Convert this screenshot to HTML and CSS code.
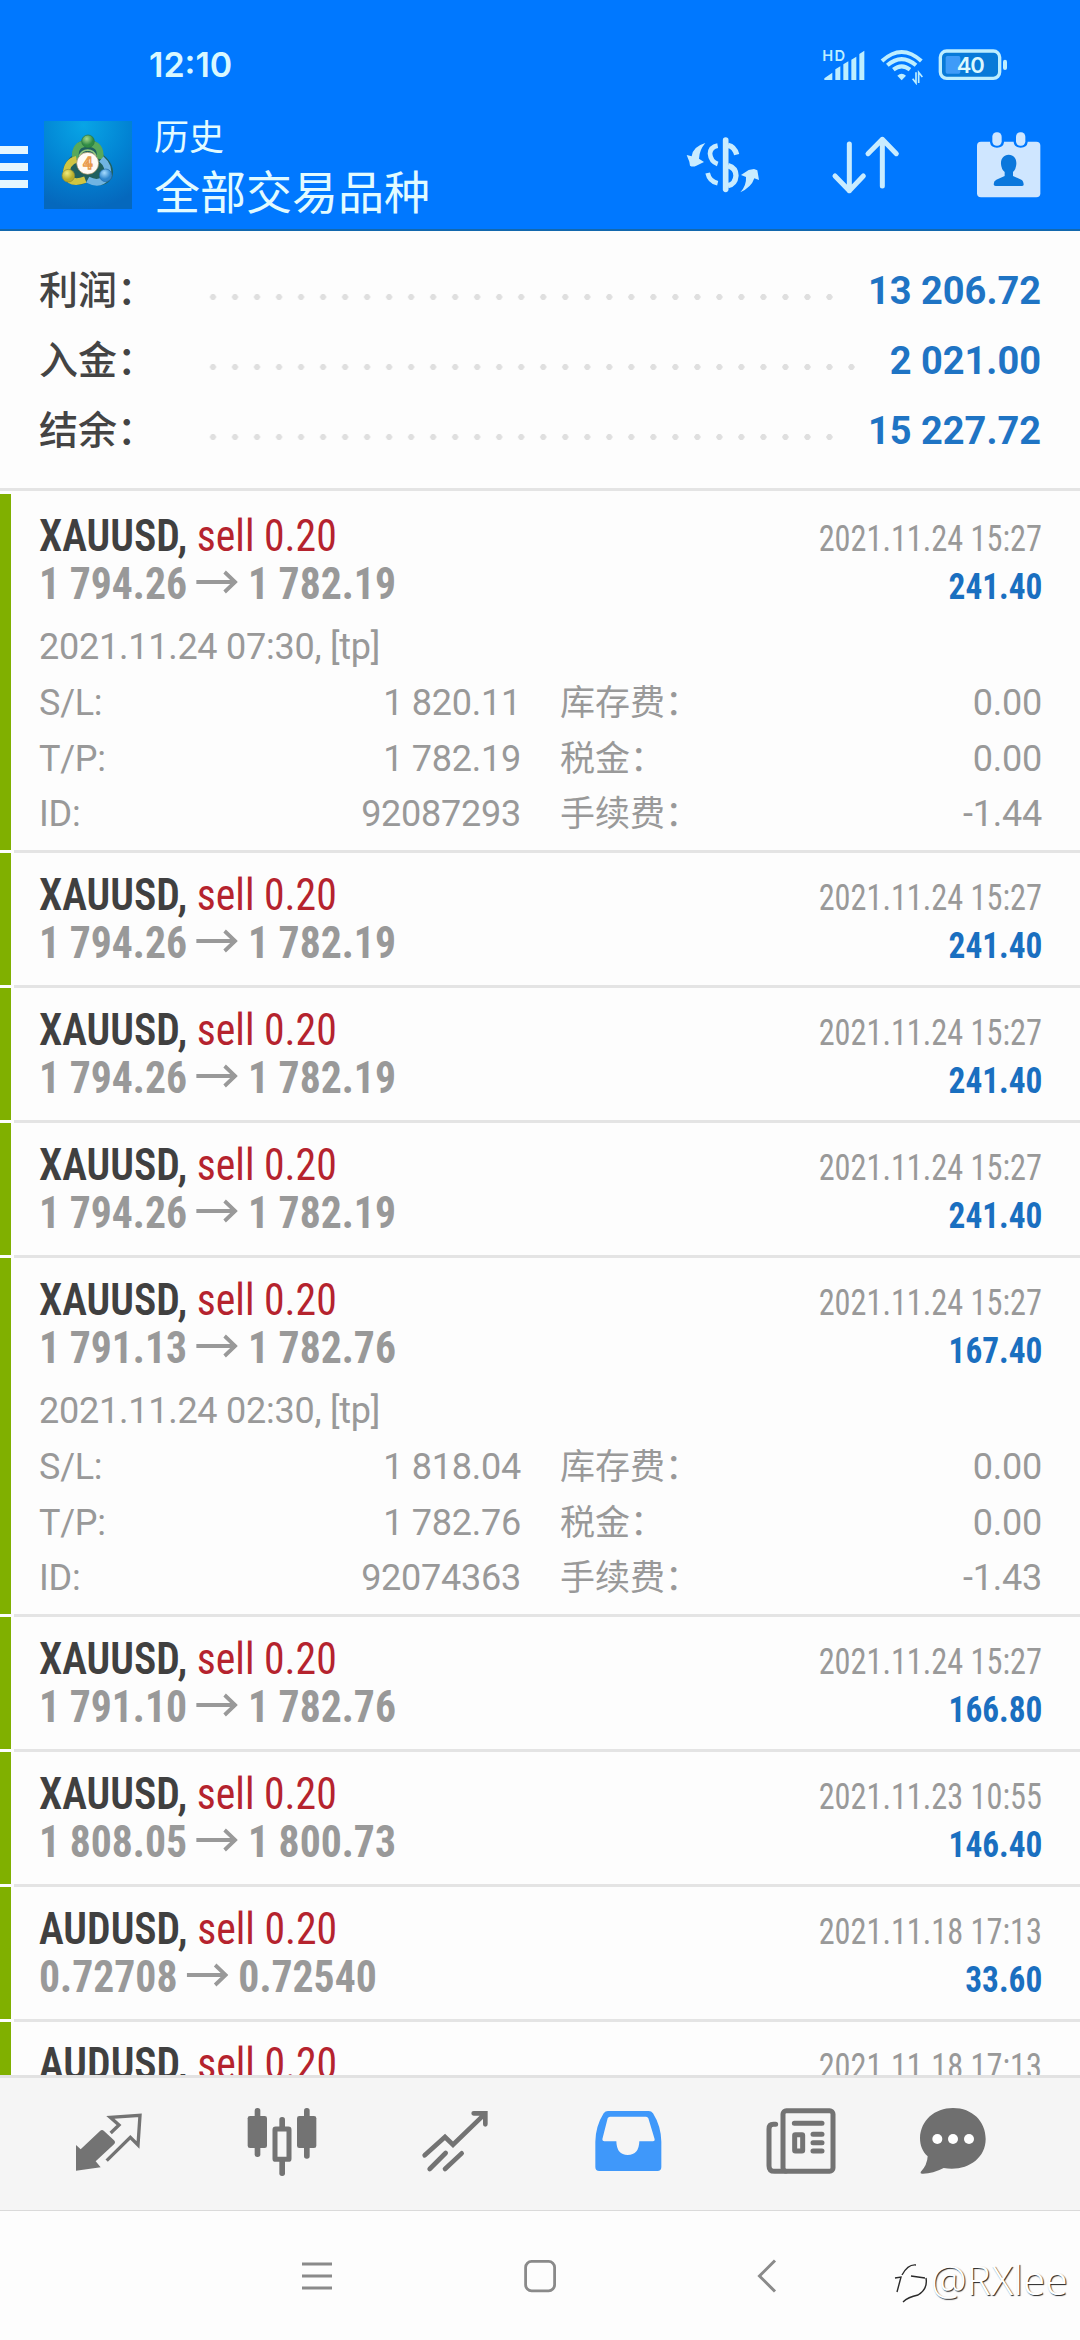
FILE: index.html
```html
<!DOCTYPE html>
<html lang="zh-CN">
<head>
<meta charset="utf-8">
<title>历史</title>
<link rel="stylesheet" href="styles.css">
</head>
<body>
<svg class="defs" width="0" height="0">
  <symbol id="arrow" viewBox="0 0 44 24"><path d="M0 12H41M30 2L41 12L30 22" fill="none" stroke="#999" stroke-width="4"/></symbol>
</svg>

<header class="header">
  <div class="status">
    <span class="clock">12:10</span>
    <div class="status-icons">
      <svg width="44" height="34" viewBox="455 48 132 102" fill="#bdeeff">
        <text x="456" y="87" font-size="44" font-weight="600" font-family="Inter, sans-serif" textLength="68">HD</text>
        <path d="M462 144V139L486 122V144zM495 144V112L510 103V144zM519 144V97L534 88V144zM543 144V83L558 74V144zM567 144V66L582 56V144z"/>
      </svg>
      <svg class="wifi" width="44" height="38" viewBox="628 48 132 114" fill="none" stroke="#bdeeff">
        <path d="M634 90Q693 36 752 90M650 103Q693 66 736 103M668 116Q693 96 718 116" stroke-width="12"/>
        <path d="M680 134Q693 122 706 134L693 148z" fill="#bdeeff" stroke="none"/>
        <path d="M736 124V156L726 143M744 156V124L755 138" stroke-width="5"/>
      </svg>
      <svg class="battery" width="70" height="34" viewBox="801 52 210 102">
        <rect x="808" y="61" width="178" height="82" rx="19" fill="#087ad8" stroke="#bdeeff" stroke-width="10"/>
        <rect x="824" y="76" width="44" height="53" rx="5" fill="#3f9bf8"/>
        <rect x="996" y="87" width="12" height="31" rx="6" fill="#bdeeff"/>
        <text x="857" y="128" font-size="66" font-weight="600" font-family="Inter, sans-serif" fill="#d9f8ff" textLength="84">40</text>
      </svg>
    </div>
  </div>
  <div class="appbar">
    <div class="burger"><i></i><i></i><i></i></div>
    <svg class="logo" width="88" height="88" viewBox="24 36 264 264">
      <defs>
        <radialGradient id="sky" cx="45%" cy="5%" r="95%"><stop offset="0" stop-color="#08a5e6"/><stop offset=".55" stop-color="#0283d3"/><stop offset="1" stop-color="#0568bd"/></radialGradient>
        <radialGradient id="green" cx="40%" cy="30%"><stop offset="0" stop-color="#a5d88c"/><stop offset="1" stop-color="#2f8b45"/></radialGradient>
        <radialGradient id="gold" cx="40%" cy="30%"><stop offset="0" stop-color="#f0ec7c"/><stop offset="1" stop-color="#b7ad2b"/></radialGradient>
        <radialGradient id="blue" cx="40%" cy="30%"><stop offset="0" stop-color="#a6dcff"/><stop offset="1" stop-color="#2f86cc"/></radialGradient>
      </defs>
      <rect x="24" y="36" width="264" height="264" fill="url(#sky)"/>
      <path d="M155 92C180 92 200 108 202 138C224 154 238 182 228 206C212 234 178 234 155 218C132 234 98 232 82 208C76 180 88 156 109 140C110 108 130 92 155 92z" fill="#20605f"/>
      <g fill="none">
        <path d="M119 150Q112 104 155 103Q198 104 192 150" stroke="#58a95b" stroke-width="20"/>
        <path d="M122 151Q92 158 90 198Q104 228 148 212" stroke="#cfc543" stroke-width="20"/>
        <path d="M155 212Q192 232 214 202Q222 172 196 150" stroke="#70b4e2" stroke-width="20"/>
        <path d="M130 141Q137 124 155 123Q174 124 180 141" stroke="#93c77f" stroke-width="5"/>
      </g>
      <circle cx="156" cy="97" r="19" fill="url(#green)" stroke="#2a7443" stroke-width="2"/>
      <circle cx="97" cy="200" r="19" fill="url(#gold)" stroke="#8f8a35" stroke-width="2"/>
      <circle cx="209" cy="199" r="19" fill="url(#blue)" stroke="#1f6aa8" stroke-width="2"/>
      <circle cx="155" cy="163" r="33" fill="#fffaf5" stroke="#9d8b55" stroke-width="2"/>
      <text x="155" y="181" font-size="50" font-weight="700" font-family="Roboto, sans-serif" text-anchor="middle" fill="#fff1df" stroke="#e89a4c" stroke-width="4">4</text>
    </svg>
    <div class="titles">
      <div class="screen">历史</div>
      <div class="filter">全部交易品种</div>
    </div>
    <div class="actions">
      <svg class="currency" width="74" height="58" viewBox="46 314 222 174" fill="none" stroke="#c9ecff">
        <path d="M165 326V474" stroke-width="17" stroke-linecap="round"/>
        <path d="M172 342Q192 346 198 370" stroke-width="16"/>
        <path d="M141 343Q119 347 118 367Q120 391 141 398" stroke-width="14"/>
        <path d="M172 403Q196 410 196 433Q194 459 172 463" stroke-width="16"/>
        <path d="M111 425Q116 450 141 456" stroke-width="14"/>
        <g fill="#c9ecff" stroke="none">
          <path d="M104 335Q66 346 63 375L48 371L56 391L58 403Q66 408 77 403L100 392L85 382Q86 356 104 335z"/>
          <path d="M209 483Q242 468 251 441L265 446L260 417L250 413L234 416L211 431L226 437Q228 462 209 483z"/>
        </g>
      </svg>
      <svg class="sort" width="70" height="60" viewBox="481 314 210 180" fill="none" stroke="#c9ecff" stroke-width="15" stroke-linecap="round" stroke-linejoin="round">
        <path d="M536 341V481M493 437L536 481L578 437M635 467V327M592 370L635 327L677 370"/>
      </svg>
      <svg class="calendar" width="66" height="68" viewBox="916 301 198 204">
        <rect x="919" y="333" width="190" height="167" rx="12" fill="#cfe6ff"/>
        <path d="M958 330V335Q960 351 979 351Q998 351 1000 335V330zM1029 330V335Q1031 351 1050 351Q1069 351 1071 335V330z" fill="#0078fe"/>
        <rect x="965" y="305" width="28" height="40" rx="13" fill="#cfe6ff"/><rect x="1036" y="305" width="28" height="40" rx="13" fill="#cfe6ff"/>
        <path d="M1014 372C1030 372 1038 384 1037 400Q1036 416 1027 424V436L1052 447Q1059 451 1059 463Q1058 466 1053 466H975Q969 466 969 461Q969 451 977 447L1002 436V424Q992 416 991 400C990 384 999 372 1014 372z" fill="#0b77dc"/>
      </svg>
    </div>
  </div>
</header>

<section class="summary">
  <div class="sum"><span class="sum-label">利润：</span><span class="dots"></span><b>13 206.72</b></div>
  <div class="sum"><span class="sum-label">入金：</span><span class="dots"></span><b>2 021.00</b></div>
  <div class="sum"><span class="sum-label">结余：</span><span class="dots"></span><b>15 227.72</b></div>
</section>

<main class="list">
  <article class="deal"><div class="bar"></div><div class="body">
    <div class="line"><span class="sym"><b>XAUUSD,</b> <em>sell 0.20</em></span><time>2021.11.24 15:27</time></div>
    <div class="line"><span class="price">1 794.26 <svg><use href="#arrow"/></svg> 1 782.19</span><span class="profit">241.40</span></div>
    <div class="details">
      <p>2021.11.24 07:30, [tp]</p>
      <dl><dt>S/L:</dt><dd>1 820.11</dd><dt>库存费：</dt><dd>0.00</dd>
      <dt>T/P:</dt><dd>1 782.19</dd><dt>税金：</dt><dd>0.00</dd>
      <dt>ID:</dt><dd>92087293</dd><dt>手续费：</dt><dd>-1.44</dd></dl>
    </div>
  </div></article>
  <article class="deal"><div class="bar"></div><div class="body">
    <div class="line"><span class="sym"><b>XAUUSD,</b> <em>sell 0.20</em></span><time>2021.11.24 15:27</time></div>
    <div class="line"><span class="price">1 794.26 <svg><use href="#arrow"/></svg> 1 782.19</span><span class="profit">241.40</span></div>
  </div></article>
  <article class="deal"><div class="bar"></div><div class="body">
    <div class="line"><span class="sym"><b>XAUUSD,</b> <em>sell 0.20</em></span><time>2021.11.24 15:27</time></div>
    <div class="line"><span class="price">1 794.26 <svg><use href="#arrow"/></svg> 1 782.19</span><span class="profit">241.40</span></div>
  </div></article>
  <article class="deal"><div class="bar"></div><div class="body">
    <div class="line"><span class="sym"><b>XAUUSD,</b> <em>sell 0.20</em></span><time>2021.11.24 15:27</time></div>
    <div class="line"><span class="price">1 794.26 <svg><use href="#arrow"/></svg> 1 782.19</span><span class="profit">241.40</span></div>
  </div></article>
  <article class="deal"><div class="bar"></div><div class="body">
    <div class="line"><span class="sym"><b>XAUUSD,</b> <em>sell 0.20</em></span><time>2021.11.24 15:27</time></div>
    <div class="line"><span class="price">1 791.13 <svg><use href="#arrow"/></svg> 1 782.76</span><span class="profit">167.40</span></div>
    <div class="details">
      <p>2021.11.24 02:30, [tp]</p>
      <dl><dt>S/L:</dt><dd>1 818.04</dd><dt>库存费：</dt><dd>0.00</dd>
      <dt>T/P:</dt><dd>1 782.76</dd><dt>税金：</dt><dd>0.00</dd>
      <dt>ID:</dt><dd>92074363</dd><dt>手续费：</dt><dd>-1.43</dd></dl>
    </div>
  </div></article>
  <article class="deal"><div class="bar"></div><div class="body">
    <div class="line"><span class="sym"><b>XAUUSD,</b> <em>sell 0.20</em></span><time>2021.11.24 15:27</time></div>
    <div class="line"><span class="price">1 791.10 <svg><use href="#arrow"/></svg> 1 782.76</span><span class="profit">166.80</span></div>
  </div></article>
  <article class="deal"><div class="bar"></div><div class="body">
    <div class="line"><span class="sym"><b>XAUUSD,</b> <em>sell 0.20</em></span><time>2021.11.23 10:55</time></div>
    <div class="line"><span class="price">1 808.05 <svg><use href="#arrow"/></svg> 1 800.73</span><span class="profit">146.40</span></div>
  </div></article>
  <article class="deal"><div class="bar"></div><div class="body">
    <div class="line"><span class="sym"><b>AUDUSD,</b> <em>sell 0.20</em></span><time>2021.11.18 17:13</time></div>
    <div class="line"><span class="price">0.72708 <svg><use href="#arrow"/></svg> 0.72540</span><span class="profit">33.60</span></div>
  </div></article>
  <article class="deal"><div class="bar"></div><div class="body">
    <div class="line"><span class="sym"><b>AUDUSD,</b> <em>sell 0.20</em></span><time>2021.11.18 17:13</time></div>
  </div></article>
</main>

<nav class="tabs">
  <svg viewBox="51 30 252 252"><path d="M78 165L92 178L150 123Q156 117 162 123L192 151Q198 157 192 163L137 214L152 232L78 242z" fill="#737373"/><path d="M182 129L207 105L181 82L270 76L264 165L241 142L170 212" fill="none" stroke="#737373" stroke-width="10"/></svg>
  <svg viewBox="567 30 252 252" fill="#737373"><rect x="590" y="78" width="58" height="96" rx="7"/><rect x="611" y="54" width="17" height="147" rx="8"/><rect x="738" y="78" width="58" height="96" rx="7"/><rect x="759" y="54" width="17" height="152" rx="8"/><rect x="685" y="81" width="17" height="40" rx="8"/><rect x="685" y="200" width="17" height="58" rx="8"/><rect x="672" y="117" width="42" height="91" rx="2" fill="#f5f5f5" stroke="#737373" stroke-width="15"/></svg>
  <svg viewBox="1086 30 252 252" fill="none" stroke="#737373" stroke-width="14" stroke-linecap="round" stroke-linejoin="miter"><path d="M1121 196L1182 141L1206 164L1297 76M1268 70H1303V103M1136 237L1184 189M1182 237L1232 190"/></svg>
  <svg viewBox="46 30 252 252"><path d="M74 155Q75 108 99 70Q104 63 112 63H234Q242 63 247 70Q271 108 272 155V231Q272 243 260 243H86Q74 243 74 231zM118 80Q113 80 111 85L95 148Q95 154 101 154H137Q138 195 171 195Q205 195 206 154H247Q253 154 252 148L233 85Q231 80 226 80z" fill="#3f98fa" fill-rule="evenodd"/></svg>
  <svg viewBox="567 30 252 252" fill="none" stroke="#737373" stroke-width="15"><rect x="639" y="62" width="150" height="182" rx="10"/><path d="M646 244H614Q597 244 597 227V117Q597 103 610 103H617M673 100H756M729 133H756M729 158H756M729 183H756" stroke-linecap="round"/><rect x="674" y="134" width="24" height="49" rx="2"/></svg>
  <svg viewBox="1023 30 252 252"><path d="M1149 54C1207 54 1247 94 1247 147C1247 209 1186 246 1121 234Q1087 252 1056 251Q1050 251 1052 246Q1072 225 1073 199C1057 184 1050 166 1050 144C1052 91 1094 54 1149 54z" fill="#6f6f6f"/><g fill="#fff"><circle cx="1102" cy="147" r="15"/><circle cx="1149" cy="147" r="15"/><circle cx="1197" cy="147" r="15"/></g></svg>
</nav>

<footer class="sysnav">
  <svg width="36" height="36" fill="none" stroke="#8a8a8a" stroke-width="2.8"><path d="M3 6H33M3 18H33M3 30H33"/></svg>
  <svg width="36" height="36" fill="none" stroke="#8a8a8a" stroke-width="2.8"><rect x="3.6" y="3.4" width="29" height="29.4" rx="6"/></svg>
  <svg width="40" height="36" fill="none" stroke="#8a8a8a" stroke-width="3"><path d="M30 2.500L14.500 18L30 33.500"/></svg>
</footer>

<div class="watermark">
  <svg width="37" height="46" viewBox="0 0 37 46" fill="none">
    <g stroke="#2b2b2b" stroke-width="1.400"><path d="M3 32L7 17L1 18M8 15Q14 4 22 5M17 16L31 18M32 18Q34 29 24 35Q14 37 9 42"/></g>
  </svg>
  <span>@RXlee</span>
</div>
</body>
</html>
```
FILE: styles.css
```css
* { box-sizing: border-box; margin: 0; padding: 0; }

body {
  position: relative;
  display: flex;
  flex-direction: column;
  width: 1080px;
  height: 2340px;
  overflow: hidden;
  background: #fdfdfd;
  font-family: Roboto, "Noto Sans CJK SC", sans-serif;
}

svg { display: block; flex: none; }
.defs { position: absolute; }

/* Header */
.header {
  flex: none;
  height: 231px;
  background: #0078ff;
  border-bottom: 2px solid #1268ae;
}
.status {
  display: flex;
  align-items: center;
  justify-content: space-between;
  height: 99px;
  padding: 30px 72px 0 149px;
}
.clock {
  color: #d9f8ff;
  font: 600 34px/40px Inter, sans-serif;
}
.status-icons { display: flex; align-items: center; }
.wifi { margin-left: 14px; margin-top: 3px; }
.battery { margin-left: 14px; }

.appbar { display: flex; align-items: center; height: 131px; }
.burger {
  display: flex;
  flex-direction: column;
  gap: 9px;
  width: 28px;
  margin-top: 4px;
}
.burger i { height: 8px; background: #e4f7ff; }
.logo { margin-left: 16px; }
.titles { margin: 10px 0 0 22px; color: #e2fbff; }
.screen { font-size: 35px; line-height: 46px; }
.filter { font-size: 46px; line-height: 62px; }
.actions { display: flex; align-items: center; margin-left: auto; padding-right: 38px; }
.sort { margin-left: 71px; }
.calendar { margin-left: 75px; }

/* Account summary */
.summary {
  flex: none;
  padding: 25px 39px 22px;
  border-bottom: 3px solid #e4e4e4;
}
.sum { display: flex; height: 70px; line-height: 70px; font-size: 38px; }
.sum-label { width: 163px; color: #444; font-size: 39px; font-weight: 500; }
.dots {
  flex: 1;
  height: 6px;
  margin: 38px 26px 0 0;
  background: radial-gradient(circle at 11px 3px, #dfdfdf 2.8px, transparent 3.3px) 0 0 / 22.03px 6px;
}
.sum b { color: #1f74c4; font-weight: 700; }

/* Deals */
.list { flex: 1; min-height: 0; padding-top: 3px; overflow: hidden; }
.deal { display: flex; }
.bar { width: 11px; margin: 0 3px 3px 0; background: #80b000; }
.body {
  flex: 1;
  padding: 18px 38px 18px 25px;
  border-bottom: 3px solid #e4e4e4;
}
.body:has(.details) { padding-bottom: 7.5px; }
.line {
  display: flex;
  align-items: baseline;
  justify-content: space-between;
  height: 48px;
  line-height: 48px;
  font-family: "Roboto Condensed", sans-serif;
  font-size: 44px;
}
.sym, .price { transform: scaleX(.947); transform-origin: left; }
.sym b { color: #404040; font-weight: 600; }
.sym em { color: #b5232e; font-style: normal; }
.line time { color: #999; font-size: 36px; line-height: 36px; transform: scaleX(.897); transform-origin: right; }
.price { color: #999; font-weight: 700; }
.price svg { display: inline-block; width: 44px; height: 24px; vertical-align: 5px; }
.profit { color: #1a6fc0; font-size: 36px; line-height: 36px; font-weight: 700; transform: scaleX(.925); transform-origin: right; }

.details { margin-top: 11px; color: #999; font-size: 36px; letter-spacing: -.25px; }
.details p { line-height: 57px; }
.details dl {
  display: grid;
  grid-template-columns: 101px 381px 180px 1fr;
  line-height: 55.5px;
}
.details dt, .details dd { height: 55.5px; }
.details dd { text-align: right; }
.details dt:nth-of-type(even) { padding-left: 39px; font-size: 35px; letter-spacing: 0; white-space: nowrap; }

/* Bottom tabs */
.tabs {
  flex: none;
  display: grid;
  grid-template-columns: repeat(5, 173px) 131px;
  align-items: start;
  justify-items: center;
  height: 136px;
  padding: 22px 0 0 22.5px;
  background: #f5f5f5;
  border-top: 3px solid #e2e2e2;
  border-bottom: 1px solid #dadada;
}
.tabs svg { width: 84px; height: 84px; }

/* System navigation */
.sysnav {
  flex: none;
  display: flex;
  align-items: center;
  gap: 187px;
  height: 129px;
  padding-left: 299px;
}

.watermark {
  position: absolute;
  left: 894px;
  top: 2257px;
  display: flex;
  align-items: flex-start;
  color: #fff;
  font: 300 40px/46px "Noto Sans", sans-serif;
  letter-spacing: .3px;
  text-shadow: 1px 1px 1px #222;
}
.watermark svg { margin-top: 3px; }
```
